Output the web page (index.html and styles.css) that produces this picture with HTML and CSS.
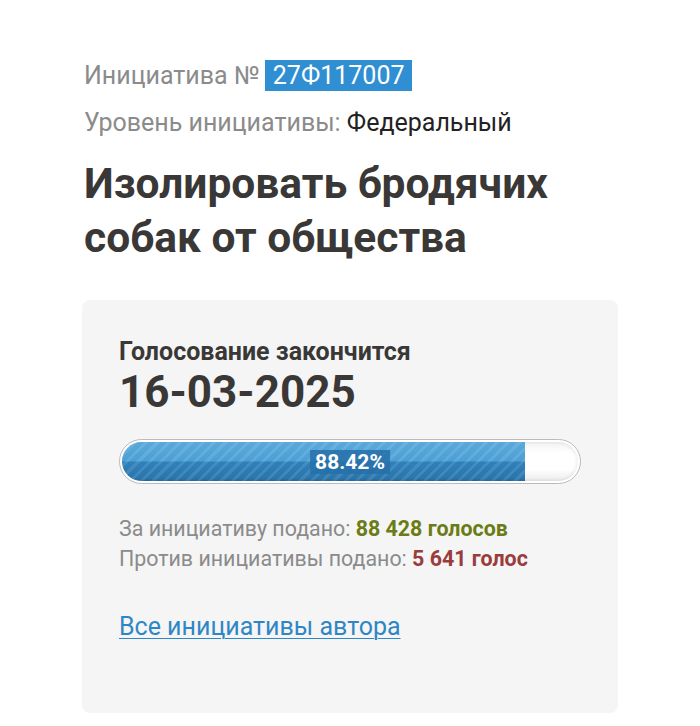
FILE: index.html
```html
<!DOCTYPE html>
<html lang="ru">
<head>
<meta charset="utf-8">
<link rel="stylesheet" href="styles.css">
</head>
<body>
<main class="page">
  <p class="meta meta-number">Инициатива № <span class="badge">27Ф117007</span></p>
  <p class="meta meta-level">Уровень инициативы: <span class="meta-value">Федеральный</span></p>
  <h1 class="title">Изолировать бродячих собак от общества</h1>
  <section class="card">
    <div class="deadline-label">Голосование закончится</div>
    <div class="deadline-date">16-03-2025</div>
    <div class="progress">
      <div class="progress-track">
        <div class="progress-fill" style="width: 88.42%"></div>
        <span class="progress-label">88.42%</span>
      </div>
    </div>
    <p class="stat">За инициативу подано: <span class="stat-for">88 428 голосов</span></p>
    <p class="stat">Против инициативы подано: <span class="stat-against">5 641 голос</span></p>
    <a class="author-link" href="#">Все инициативы автора</a>
  </section>
</main>
</body>
</html>
```

FILE: styles.css
```css
html, body {
  margin: 0;
  padding: 0;
  background: #ffffff;
}

body {
  font-family: Roboto, "Noto Sans", "Liberation Sans", sans-serif;
  color: #3a3836;
}

.page {
  padding: 60px 82px 0 84px;
}

.meta {
  margin: 0;
  font-size: 25px;
  line-height: 32px;
  color: #8b8b8b;
}

.meta-level {
  margin-top: 15px;
}

.badge {
  display: inline-block;
  background: #2f8fd2;
  color: #ffffff;
  padding: 0 7px 0 8px;
  line-height: 31px;
  margin-left: -1px;
}

.meta-value {
  color: #222222;
}

.title {
  margin: 18px 0 0;
  font-size: 42.5px;
  font-weight: 700;
  line-height: 54px;
  color: #3a3836;
  max-width: 500px;
}

.card {
  margin-top: 35px;
  margin-left: -2px;
  width: 536px;
  box-sizing: border-box;
  background: #f5f5f5;
  border-radius: 8px;
  padding: 37px 36px 71px 37px;
}

.deadline-label {
  font-size: 25px;
  font-weight: 700;
  line-height: 30px;
  color: #3a3836;
}

.deadline-date {
  font-size: 44px;
  font-weight: 700;
  line-height: 50px;
  color: #3a3836;
}

.progress {
  margin-top: 22px;
  height: 45px;
  width: 462px;
  box-sizing: border-box;
  border: 1.5px solid #bbbbbb;
  border-radius: 23px;
  background: #ffffff;
  padding: 2px;
}

.progress-track {
  position: relative;
  height: 100%;
  border-radius: 20px;
  overflow: hidden;
  background: linear-gradient(to bottom, #f3f3f3 0%, #ffffff 30%, #ffffff 70%, #ececec 100%);
  box-shadow: inset 0 0 4px rgba(0, 0, 0, 0.12);
}

.progress-fill {
  height: 100%;
  background:
    repeating-linear-gradient(135deg, rgba(255, 255, 255, 0.10) 0 3px, rgba(255, 255, 255, 0) 3px 8px),
    linear-gradient(to bottom, #5aa9da 0%, #4c9fd5 48%, #2f80ba 52%, #2a76ad 92%, #23679a 100%);
}

.progress-label {
  position: absolute;
  top: 50%;
  left: 50%;
  transform: translate(-50%, -50%);
  background: rgba(38, 112, 168, 0.85);
  color: #ffffff;
  font-size: 21px;
  font-weight: 700;
  line-height: 24px;
  padding: 0 5px;
}

.stat {
  margin: 0;
  font-size: 21.4px;
  line-height: 30px;
  color: #8b8b8b;
}

.progress + .stat {
  margin-top: 30px;
}

.stat-for {
  color: #6b7c16;
  font-weight: 700;
}

.stat-against {
  color: #9a3c3c;
  font-weight: 700;
}

.author-link {
  display: inline-block;
  margin-top: 38px;
  font-size: 25px;
  line-height: 30px;
  color: #2f86c4;
  text-decoration: underline;
  text-underline-offset: 3px;
  text-decoration-thickness: 1px;
}
```
